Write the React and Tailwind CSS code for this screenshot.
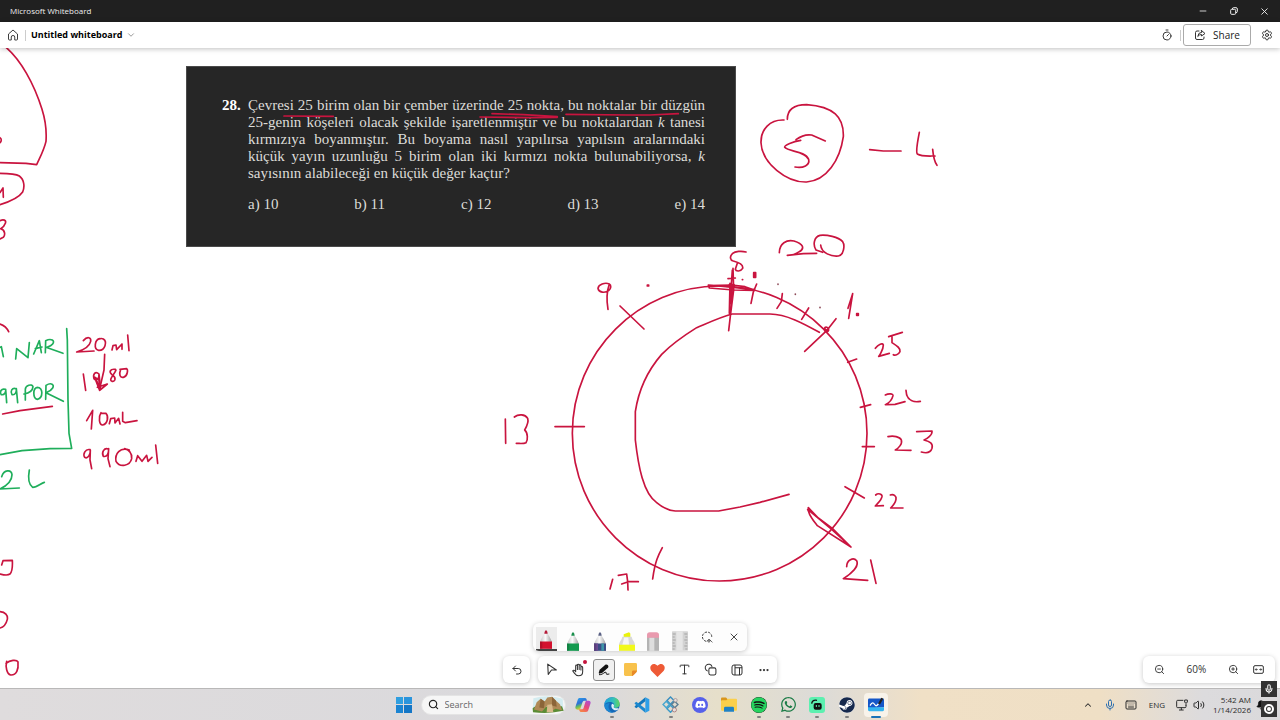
import { ChevronDown, ChevronUp, Minus, X, Timer, Settings, Undo2, Type, Ellipsis, ZoomIn, ZoomOut, Mic, Keyboard, Volume2, Search, Bell } from 'lucide-react';
import { FaDiscord, FaSpotify, FaSteam, FaWhatsapp } from 'react-icons/fa';

const RED = '#c9143f';
const GREEN = '#1fae5b';

// Pen strokes are stored per area, in thirds of a pixel from the area's origin.
const INK = [
  {
    x: 0,
    y: 0,
    color: RED,
    strokes: [
      'M18 142 C62 180 102 250 126 328 C138 366 140 395 138 424 C132 450 120 472 110 494 L78 490 L0 488',
      'M0 413 C5 415 5 425 0 428',
      'M0 520 C24 520 46 520 58 528 C74 540 74 562 68 576 C56 594 26 606 0 614',
      'M0 578 L9 564 L10 592',
      'M0 662 C10 657 20 660 16 670 C13 680 6 684 2 686 C16 690 16 706 10 712 L0 717',
    ],
  },
  {
    x: 0,
    y: 300,
    color: RED,
    strokes: [
      'M0 72 C12 76 22 86 26 95',
      'M8 342 L60 332 L157 319',
      'M250 122 C262 108 274 112 272 124 C268 142 250 150 230 156 L282 153',
      'M300 116 C284 118 280 148 296 151 C316 152 322 124 310 117 C306 115 302 115 298 117',
      'M336 150 L339 137 L348 135 L350 149 L366 132 L366 148',
      'M383 105 L387 152',
      'M314 163 L312 210 L300 262',
      'M250 222 L257 271',
      'M297 222 C286 212 278 222 282 236 C288 244 298 238 297 222 L302 268 L284 232 L299 271 L322 252 L292 262',
      'M284 232 L297 240 L298 264 L290 244',
      'M346 208 C330 206 326 216 336 224 C350 232 346 246 336 244 C324 240 344 222 348 210',
      'M362 208 C356 224 360 234 370 232 C384 228 384 208 380 206 L360 208',
      'M260 362 L278 331 L274 387',
      'M303 338 C294 352 298 376 308 375 C324 372 326 348 318 340 L303 340',
      'M328 371 L332 356 L344 354 L345 369 L356 355 L360 372',
      'M368 337 L368 364 L376 368 L411 362',
      'M270 449 C256 446 248 462 254 472 C264 478 272 462 271 450 L270 480 L275 506',
      'M325 447 C312 442 304 458 310 469 C322 472 326 460 326 446 L324 476 L330 500',
      'M388 450 C360 440 344 462 348 484 C360 504 390 498 395 476 C396 460 390 450 374 446',
      'M408 484 L413 467 L426 484 L440 466 L444 484 L456 472',
      'M467 435 L473 490',
      'M5 795 L9 782 L37 781 C38 800 38 814 30 822 C22 828 8 824 0 822',
      'M0 935 C16 936 24 946 22 958 C18 974 8 982 0 984',
      'M20 1084 C16 1100 20 1122 32 1125 C50 1126 56 1108 54 1086 C50 1078 30 1080 18 1090',
    ],
  },
  {
    x: 0,
    y: 300,
    color: GREEN,
    strokes: [
      'M0 142 L4 140 L10 170',
      'M47 177 L50 146 L84 173 L88 128',
      'M101 162 L118 122 L124 158 M106 146 L126 141',
      'M136 158 L137 122 C154 114 166 122 158 132 C152 140 144 140 138 142 L189 160',
      'M200 86 L202 120 L204 300 L207 400 L215 445 L150 446 L66 452 L0 464',
      'M16 268 C4 264 -2 276 4 284 C14 286 18 276 17 268 L20 308',
      'M48 266 C36 262 30 274 36 284 C46 286 50 276 49 266 L53 308',
      'M76 300 L76 268 C76 256 96 250 99 260 C98 274 84 280 72 282',
      'M112 262 C98 264 98 296 112 298 C130 294 130 262 112 262',
      'M137 298 L138 256 C154 246 164 254 158 264 C152 274 144 276 138 278 L190 304',
      'M5 530 C12 508 34 508 36 524 C36 544 18 558 0 567 L58 564',
      'M88 510 C84 532 84 552 98 562 C112 562 122 550 133 547',
    ],
  },
  {
    x: 180,
    y: 60,
    color: RED,
    strokes: ['M312 168 L460 169', 'M936 161 L1030 164 L1132 170 M900 171 L1040 173 L1132 172', 'M1158 163 L1340 165 L1410 165 L1495 161'],
  },
  {
    x: 490,
    y: 240,
    color: RED,
    strokes: [
      'M358 132 C345 126 325 134 324 145 C326 158 345 160 356 152 C364 145 364 135 358 132 C350 155 350 185 354 208',
      'M472 135 h4 v3 h-4 z',
      'M390 198 L462 267',
      'M46 537 L47 610',
      'M73 531 C85 522 105 522 113 535 C117 548 110 560 104 570 C114 578 114 600 108 608 C100 612 90 610 79 610',
      'M195 560 H283',
      'M368 1018 L360 1047',
      'M385 1006 L410 1002 L413 1025 L414 1050 M395 1032 L415 1025 L445 1025',
      'M517 923 C505 945 495 965 488 1017',
      // outer circle and the inner sweep
      'M688 138 C932 138 1131 335 1131 580 C1131 825 932 1023 688 1023 C446 1023 247 825 247 580 C247 335 446 138 688 138',
      'M988 277 C940 250 890 223 840 222 L726 222 C690 232 660 246 620 263 C580 288 540 318 515 343 C470 395 445 455 436 515 L436 600 C445 680 460 760 500 788 C520 805 540 812 556 813 L686 813 L750 801 L810 787 L897 763',
    ],
  },
  {
    x: 690,
    y: 90,
    color: RED,
    strokes: [
      'M282 90 C240 88 212 118 213 158 C216 220 290 278 350 276 C410 272 450 210 460 140 C462 80 430 50 350 44 C305 44 292 62 292 88',
      'M318 149 C330 140 345 132 365 135 L406 153 M332 151 C310 155 282 165 284 172 C295 186 345 182 356 208 C360 225 340 236 315 231',
      'M539 179 L580 183 L633 183',
      'M688 127 C684 150 676 185 682 192 C695 200 715 198 735 198 M728 178 C730 200 733 215 741 226',
      'M268 488 C268 460 290 448 312 453 C340 462 345 475 328 485 C315 494 298 496 292 496 L340 491 L380 490',
      'M392 465 C394 490 425 500 445 498 C462 495 465 465 458 455 C445 440 410 434 390 436 C372 440 368 465 378 480 L398 487',
      'M168 486 C155 482 135 484 128 490 C118 500 120 510 130 513 C150 518 160 525 158 535 C152 545 138 545 136 538 L142 520',
      'M129 535 L131 600 L122 670 L116 722 M127 540 L118 670 L120 580 L126 590 L124 640 M114 566 L136 564',
      'M118 584 h14 v6 h-14 z',
      'M55 587 L125 585 L165 590 L195 601 L130 600 L58 594 L55 585 L190 598',
      'M157 569 h1',
      'M191 548 h6 v14 h-6 z M194 550 v10',
      'M500 671 h5 v5 h-5 z',
      'M200 582 L190 606 L183 640',
      'M277 611 L274 635 L261 655',
      'M356 654 L335 688',
      'M438 686 L410 722 L344 784',
      'M403 716 C406 708 416 712 416 720 C414 728 402 726 404 716 L412 722 L406 724',
      'M474 655 L488 611 L476 685',
      'M556 775 C565 762 578 758 580 765 C580 780 566 800 566 799 L598 790',
      'M596 740 L637 727 M606 740 L606 758 C622 768 632 775 630 785 C625 795 615 797 610 794',
      'M473 817 L500 807',
    ],
  },
  {
    x: 690,
    y: 90,
    color: '#8d4a58',
    strokes: ['M264 582 v1', 'M316 612 v1', 'M390 652 v1'],
  },
  {
    x: 730,
    y: 320,
    color: RED,
    strokes: [
      'M391 262 L422 254',
      'M397 380 H433',
      'M345 500 L403 534',
      'M235 563 L265 594 L307 625 L363 681 L262 617 C252 604 240 590 236 575 L233 568 L305 628 L363 681',
      'M466 225 C475 220 490 220 489 227 C486 240 475 250 466 254 L495 253 L525 245',
      'M528 211 L530 225 C535 240 550 248 571 244',
      'M474 350 C490 346 510 350 514 360 C518 372 505 385 496 390 L543 391',
      'M560 335 L606 333 C608 345 590 357 582 360 C600 365 610 370 606 385 C602 398 588 400 574 396',
      'M437 525 C445 518 457 522 456 530 C454 542 440 552 436 558 L460 557',
      'M481 525 C490 521 500 528 498 538 C496 550 488 558 482 564 L519 564',
      'M350 740 C350 720 370 710 380 722 C388 738 365 760 340 776 L413 781',
      'M422 720 L438 790',
    ],
  },
];

const QUESTION = [
  'Çevresi 25 birim olan bir çember üzerinde 25 nokta, bu noktalar bir düzgün',
  <>25-genin köşeleri olacak şekilde işaretlenmiştir ve bu noktalardan <i>k</i> tanesi</>,
  'kırmızıya boyanmıştır. Bu boyama nasıl yapılırsa yapılsın aralarındaki',
  <>küçük yayın uzunluğu 5 birim olan iki kırmızı nokta bulunabiliyorsa, <i>k</i></>,
];

const CHOICES = ['a) 10', 'b) 11', 'c) 12', 'd) 13', 'e) 14'];

function Ink() {
  return (
    <svg className="absolute inset-0 w-full h-full pointer-events-none" role="img" aria-label="Ink" fill="none" strokeWidth="5" strokeLinecap="round" strokeLinejoin="round">
      <g transform="translate(0 -48)">
        {INK.map((area, i) => (
          <g key={i} transform={`translate(${area.x} ${area.y}) scale(0.33333)`} stroke={area.color}>
            {area.strokes.map((d) => (
              <path key={d} d={d} />
            ))}
          </g>
        ))}
      </g>
    </svg>
  );
}

function QuestionCard() {
  return (
    <article className="absolute left-[186px] top-[18px] w-[550px] h-[181px] bg-[#262626] text-[#dddcd8] border border-[#4a4a4a] pt-[30px] pl-[35px] pr-[30px] font-['Liberation_Serif',serif] text-[15px] leading-[17px]">
      <div className="flex gap-2">
        <b className="w-[18px] whitespace-nowrap text-white">28.</b>
        <div className="flex-1">
          {QUESTION.map((line, i) => (
            <p key={i} className="[text-align-last:justify] whitespace-nowrap">
              {line}
            </p>
          ))}
          <p>sayısının alabileceği en küçük değer kaçtır?</p>
          <div className="flex justify-between mt-3.5">
            {CHOICES.map((c) => (
              <span key={c}>{c}</span>
            ))}
          </div>
        </div>
      </div>
    </article>
  );
}

function IconButton({ label, className = '', children }) {
  return (
    <button type="button" aria-label={label} className={`flex items-center justify-center ${className}`}>
      {children}
    </button>
  );
}

function Pen({ tip, band, id }) {
  return (
    <svg viewBox="0 0 36 56" className="w-[12px] h-[19px]">
      <defs>
        <linearGradient id={id}>
          <stop offset="0" stopColor="#c4c4c4" />
          <stop offset="0.45" stopColor="#fafafa" />
          <stop offset="1" stopColor="#9c9c9c" />
        </linearGradient>
      </defs>
      <path d="M13 10 C10 18 1 26 0 40 V56 H36 V40 C35 26 26 18 23 10 Z" fill={`url(#${id})`} />
      <path d="M13 11 C14 2 16 0 18 0 C20 0 22 2 23 11 Z" fill={tip} />
      {band === 'galaxy' ? (
        <>
          <rect y="34" width="36" height="22" fill="#3c4c84" />
          <path d="M0 34 H12 V56 H0 Z" fill="#6b4c93" />
          <path d="M22 34 H30 V56 H22 Z" fill="#3f95a8" />
        </>
      ) : (
        <rect y="34" width="36" height="22" fill={band} />
      )}
      <rect x="0" y="34" width="7" height="22" fill="#000" opacity="0.15" />
    </svg>
  );
}

function PenTray() {
  return (
    <div className="w-[214px] h-[28px] grid grid-cols-8 bg-[#fdfdfd] rounded-md shadow-[0_1px_5px_rgba(0,0,0,0.22)] overflow-hidden">
      <IconButton label="Red pen" className="items-end! mx-auto mt-[4px] w-[21px] bg-[#ececec] border-b-2 border-[#444]">
        <Pen id="pen-red" tip="#b51a38" band="#d3122f" />
      </IconButton>
      <IconButton label="Green pen" className="items-end!">
        <Pen id="pen-green" tip="#1a8f4c" band="#149a4f" />
      </IconButton>
      <IconButton label="Galaxy pen" className="items-end!">
        <Pen id="pen-galaxy" tip="#5a6285" band="galaxy" />
      </IconButton>
      <IconButton label="Highlighter" className="items-end!">
        <svg viewBox="0 0 48 56" className="w-[16px] h-[19px]">
          <path d="M14 16 V6 L30 0 L34 4 V16 Z" fill="#e9f20c" />
          <path d="M10 14 H38 C40 26 48 28 48 40 V56 H0 V40 C0 28 8 26 10 14 Z" fill="#d9d9d9" />
          <path d="M15 16 H28 C29 28 30 30 30 38 H10 C12 28 14 26 15 16 Z" fill="#f6f6f6" />
          <path d="M0 38 H48 V56 H0 Z" fill="#f2f91a" />
        </svg>
      </IconButton>
      <IconButton label="Eraser" className="items-end!">
        <svg viewBox="0 0 36 56" className="w-[12px] h-[19px]">
          <rect width="36" height="30" rx="8" fill="#e99aae" />
          <rect y="17" width="36" height="39" fill="#b4b4b4" />
          <rect x="7" y="17" width="15" height="39" fill="#dedede" />
        </svg>
      </IconButton>
      <IconButton label="Ruler" className="items-end!">
        <svg viewBox="0 0 48 58" className="w-[16px] h-[20px]">
          <rect width="48" height="58" rx="2" fill="#d3d3d3" />
          <rect x="13" width="19" height="58" fill="#e6e6e6" />
          <path d="M2 8h9M2 17h6M2 26h9M2 35h6M2 44h9M2 53h6M46 8h-9M46 17h-6M46 26h-9M46 35h-6M46 44h-9M46 53h-6" stroke="#8b8b8b" strokeWidth="2" />
        </svg>
      </IconButton>
      <IconButton label="Lasso select">
        <svg viewBox="0 0 36 36" className="w-3 h-3" fill="none" stroke="#333" strokeWidth="3">
          <path d="M16 31 A14 14 0 1 1 32 20" strokeDasharray="7 4" />
          <path d="M20 29 C22 24 30 26 27 31 C24 36 16 30 22 27 C28 26 30 30 34 34" strokeWidth="2.5" />
        </svg>
      </IconButton>
      <IconButton label="Close">
        <X size={12} strokeWidth={1.8} color="#333" />
      </IconButton>
    </div>
  );
}

function Toolbar() {
  const panel = 'h-[27px] bg-white rounded-md shadow-[0_1px_5px_rgba(0,0,0,0.22)]';
  return (
    <div className="flex gap-2">
      <IconButton label="Undo" className={`${panel} w-[27px]`}>
        <Undo2 size={12} strokeWidth={2} color="#333" />
      </IconButton>
      <div className={`${panel} w-[239px] grid grid-cols-9`}>
        <IconButton label="Select">
          <svg viewBox="0 0 24 24" className="w-[13px] h-[13px]" fill="none" stroke="#333" strokeWidth="2" strokeLinejoin="round">
            <path d="M5 2 L21 13 H12 L6 21 Z" />
          </svg>
        </IconButton>
        <IconButton label="Pan" className="relative">
          <svg viewBox="0 0 24 24" className="w-[14px] h-[14px]" fill="none" stroke="#333" strokeWidth="1.8" strokeLinecap="round" strokeLinejoin="round">
            <path d="M8 12 V5 a1.5 1.5 0 0 1 3 0 V11 M11 11 V3.5 a1.5 1.5 0 0 1 3 0 V11 M14 11 V4.5 a1.5 1.5 0 0 1 3 0 V12 M17 12 V7.5 a1.5 1.5 0 0 1 3 0 V15 C20 20 17 22 13 22 C9 22 7 19 5.5 17 L3 13.5 C4 12 6 12 8 15 V12" />
          </svg>
          <span className="absolute right-[4px] top-[4px] w-1 h-1 rounded-full bg-[#c4143c]" />
        </IconButton>
        <IconButton label="Pens" className="w-[22px] h-[22px] place-self-center rounded-[3px] border border-[#8a8a8a] bg-[#f0f0f0]">
          <svg viewBox="0 0 36 36" className="w-3 h-3">
            <path d="M2 27 L5 17 L22 2 C27 -1 34 5 30 11 L13 26 L4 29 Z" fill="#111" />
            <path d="M3 32 C10 33 16 28 21 25 C26 22 24 30 26 31 L34 30" fill="none" stroke="#111" strokeWidth="3" />
          </svg>
        </IconButton>
        <IconButton label="Sticky note">
          <svg viewBox="0 0 36 36" className="w-[13px] h-[13px]">
            <path d="M4 0 H32 Q36 0 36 4 V22 L23 36 H4 Q0 36 0 32 V4 Q0 0 4 0 Z" fill="#f8c24c" />
            <path d="M22 36 V25 Q22 21 26 21 H36 Q36 24 34 26 L27 33 Q24 36 22 36 Z" fill="#e88a26" />
          </svg>
        </IconButton>
        <IconButton label="Reactions">
          <svg viewBox="0 0 24 22" className="w-[15px] h-[14px]">
            <path d="M12 22 L2 12 C-3 5 5 -3 12 4 C19 -3 27 5 22 12 Z" fill="#ee5a36" />
          </svg>
        </IconButton>
        <IconButton label="Text">
          <Type size={13} strokeWidth={1.8} color="#333" />
        </IconButton>
        <IconButton label="Shapes">
          <svg viewBox="0 0 24 24" className="w-[13px] h-[13px]" fill="none" stroke="#333" strokeWidth="1.9">
            <path d="M7 15 A6.5 6.5 0 1 1 15 7" />
            <rect x="9" y="9" width="13" height="13" rx="3" />
          </svg>
        </IconButton>
        <IconButton label="Templates">
          <svg viewBox="0 0 24 24" className="w-[12px] h-[12px]" fill="none" stroke="#333" strokeWidth="2">
            <rect x="2" y="2" width="20" height="20" rx="4" />
            <path d="M8 2 V22 M8 7.5 H22 M17 7.5 V22" />
          </svg>
        </IconButton>
        <IconButton label="More">
          <Ellipsis size={12} strokeWidth={2.5} color="#333" />
        </IconButton>
      </div>
    </div>
  );
}

function ZoomPanel() {
  return (
    <div className="absolute right-[5px] bottom-[5px] w-[132px] h-[27px] px-[5px] flex items-center justify-between bg-white rounded-md shadow-[0_1px_5px_rgba(0,0,0,0.22)] text-[10px] text-[#333]">
      <IconButton label="Zoom out" className="w-[22px]">
        <ZoomOut size={11} strokeWidth={2} />
      </IconButton>
      <button type="button" className="w-[46px]">60%</button>
      <IconButton label="Zoom in" className="w-[22px]">
        <ZoomIn size={11} strokeWidth={2} />
      </IconButton>
      <IconButton label="Fit to screen" className="w-[22px]">
        <svg viewBox="0 0 33 27" className="w-[11px] h-[9px]" fill="none" stroke="#333" strokeWidth="3">
          <rect x="2" y="2" width="29" height="23" rx="4" />
          <path d="M7 13.5 H14 M19 13.5 H26 M10 10 L7 13.5 L10 17 M23 10 L26 13.5 L23 17" strokeWidth="2.5" />
        </svg>
      </IconButton>
    </div>
  );
}

function Copilot() {
  return (
    <svg viewBox="0 0 48 48" className="w-4 h-4">
      <defs>
        <linearGradient id="cp-a" x2="0.4" y2="1">
          <stop offset="0" stopColor="#2aa5e8" />
          <stop offset="0.5" stopColor="#2f6fd8" />
          <stop offset="0.7" stopColor="#5dbb63" />
          <stop offset="1" stopColor="#f0cc30" />
        </linearGradient>
        <linearGradient id="cp-b" x1="1" x2="0.4" y2="1">
          <stop offset="0" stopColor="#a44fe0" />
          <stop offset="0.6" stopColor="#e8487a" />
          <stop offset="1" stopColor="#f4804a" />
        </linearGradient>
      </defs>
      <path d="M15 3 H30 C34 3 35 7 36 11 H27 C24 11 23 14 22 17 L17 33 C16 37 14 38 11 38 H8 C1 38 0 33 2 27 L8 9 C9 5 11 3 15 3 Z" fill="url(#cp-a)" />
      <path d="M33 45 H18 C14 45 13 41 12 37 H20 C23 37 25 35 26 32 L31 15 C32 12 34 11 37 11 H40 C47 11 48 15 46 21 L40 39 C39 43 37 45 33 45 Z" fill="url(#cp-b)" />
    </svg>
  );
}

function Edge() {
  return (
    <svg viewBox="0 0 48 48" className="w-4 h-4">
      <defs>
        <linearGradient id="edge-top" x2="1">
          <stop offset="0" stopColor="#1f9fe0" />
          <stop offset="0.6" stopColor="#35c1b8" />
          <stop offset="1" stopColor="#62d55a" />
        </linearGradient>
      </defs>
      <circle cx="24" cy="24" r="23" fill="#1568b8" />
      <path d="M1 24 C1 10 12 1 25 1 C38 1 47 11 47 21 C47 29 41 33 34 33 C29 33 28 30 30 27 C32 20 26 15 18 15 C10 15 3 19 1 24 Z" fill="url(#edge-top)" />
      <path d="M30 27 C28 30 29 34 36 34 C40 34 43 33 44 35 C40 40 34 41 29 38 C22 34 20 26 24 20 C28 20 31 23 30 27 Z" fill="#dff0f6" />
      <path d="M17 19 C9 30 16 44 28 47 C14 48 2 38 1 25 C5 20 11 18 17 19 Z" fill="#1c87d2" />
    </svg>
  );
}

function VsCode() {
  return (
    <svg viewBox="0 0 48 48" className="w-4 h-4">
      <path d="M34 1 L46 7 V41 L34 47 Z" fill="#2d9fe8" />
      <path d="M34 13 L7 34 L2 30 V28 L34 1 Z" fill="#1177bd" />
      <path d="M34 35 L7 14 L2 18 V20 L34 47 Z" fill="#1b88cf" />
    </svg>
  );
}

function DiamondApp() {
  return (
    <svg viewBox="0 0 48 48" className="w-[17px] h-[17px]" fill="none" strokeWidth="4">
      <path d="M24 3 L34 13 L24 23 L14 13 Z" stroke="#3a8fc0" />
      <path d="M12 15 L21 24 L12 33 L3 24 Z" stroke="#48a7cf" />
      <path d="M36 15 L45 24 L36 33 L27 24 Z" stroke="#5e7f94" />
      <path d="M24 26 L34 36 L24 46 L14 36 Z" stroke="#3c9ac8" />
      <circle cx="38" cy="12" r="5" stroke="#9a8b8b" strokeWidth="2" fill="#e6dedc" />
      <circle cx="35" cy="39" r="6" stroke="#9c6767" strokeWidth="2" fill="#e6dedc" />
    </svg>
  );
}

function Explorer() {
  return (
    <svg viewBox="0 0 48 44" className="w-4 h-[15px]">
      <path d="M0 4 Q0 1 3 1 H15 L20 6 V14 H0 Z" fill="#d9961d" />
      <path d="M0 12 Q0 9 3 9 H16 L21 5 H45 Q48 5 48 8 V38 Q48 41 45 41 H3 Q0 41 0 38 Z" fill="#fbd04b" />
      <path d="M9 44 V33 Q9 29 13 29 H35 Q39 29 39 33 V44 Z" fill="#2082c4" />
    </svg>
  );
}

function GreenBot() {
  return (
    <span className="w-4 h-4 rounded-[3px] bg-[#5cf0b0] flex items-center justify-center">
      <svg viewBox="0 0 36 36" className="w-3 h-3">
        <path d="M2 14 C3 5 9 2 18 4" fill="none" stroke="#111" strokeWidth="4" />
        <rect x="8" y="12" width="24" height="20" rx="6" fill="#111" />
        <path d="M16 18 V24 M24 18 V24" stroke="#5cf0b0" strokeWidth="3" />
      </svg>
    </span>
  );
}

function WhiteboardApp() {
  return (
    <svg viewBox="0 0 48 44" className="w-4 h-[15px]">
      <path d="M0 8 Q0 4 4 4 H44 Q48 4 48 8 V30 L0 34 Z" fill="#1557c8" />
      <path d="M0 30 H48 V38 Q48 42 44 42 H4 Q0 42 0 38 Z" fill="#33b4f0" />
      <path d="M7 24 C12 14 16 16 20 22 C24 28 27 26 31 20" fill="none" stroke="#fff" strokeWidth="4" strokeLinecap="round" />
      <path d="M30 20 L40 2 L46 5 L36 22 Z" fill="#222" />
    </svg>
  );
}

const APPS = [
  { name: 'Copilot', icon: <Copilot /> },
  { name: 'Edge', icon: <Edge />, running: true },
  { name: 'Visual Studio Code', icon: <VsCode /> },
  { name: 'Diagrams', icon: <DiamondApp />, running: true },
  {
    name: 'Discord',
    icon: (
      <span className="w-4 h-4 rounded-full bg-[#5661ea] flex items-center justify-center">
        <FaDiscord size={11} color="#fff" />
      </span>
    ),
  },
  { name: 'File Explorer', icon: <Explorer /> },
  {
    name: 'Spotify',
    icon: (
      <span className="rounded-full bg-[#111]">
        <FaSpotify size={16} color="#25d35f" />
      </span>
    ),
    running: true,
  },
  { name: 'WhatsApp', icon: <FaWhatsapp size={17} color="#1c7c47" />, running: true },
  { name: 'Android', icon: <GreenBot />, running: true },
  {
    name: 'Steam',
    icon: (
      <span className="rounded-full bg-white">
        <FaSteam size={16} color="#16294d" />
      </span>
    ),
    running: true,
  },
  { name: 'Whiteboard', icon: <WhiteboardApp />, active: true },
];

function Taskbar() {
  return (
    <footer className="h-8 shrink-0 grid grid-cols-[1fr_auto_1fr] items-center border-t border-[#b9b8b8] bg-[linear-gradient(90deg,#dfdcdd_0%,#dad9dc_40%,#dcdada_48%,#e6dfca_56%,#dcdbd8_64%,#f0e0c6_72%,#efdfc5_86%,#dcdbdd_94%,#dad9db_100%)]">
      <span />
      <div className="flex items-center pl-0.5">
        <IconButton label="Start" className="w-[24px] h-6">
          <span className="grid grid-cols-2 gap-px w-4 h-4">
            <span className="bg-[#2f9fe0]" />
            <span className="bg-[#2a94dc]" />
            <span className="bg-[#1b84d2]" />
            <span className="bg-[#1476c6]" />
          </span>
        </IconButton>
        <label className="ml-[5px] mr-[3px] w-[145px] h-5 pl-1.5 pr-px flex items-center gap-1.5 rounded-full bg-[#f6f6f6] border border-[#e4e4e4]">
          <Search size={11} strokeWidth={2.5} color="#222" className="shrink-0" />
          <input aria-label="Search" placeholder="Search" className="min-w-0 flex-1 bg-transparent text-[9px] placeholder:text-[#666] outline-none" />
          <svg viewBox="0 0 96 50" className="w-8 h-[17px] shrink-0">
            <path d="M4 6 Q50 -6 92 8 L94 40 Q50 54 2 44 Z" fill="#d4ecf0" />
            <path d="M2 36 C10 28 20 26 30 32 L90 30 L95 44 Q50 54 3 48 Z" fill="#5b8c34" />
            <path d="M6 40 L14 18 L26 8 L38 16 L46 4 L60 2 L72 14 L84 24 L90 42 L70 38 L58 46 L44 30 L30 46 Z" fill="#b08a58" />
            <path d="M26 8 L38 16 L36 36 L22 34 Z M60 2 L72 14 L74 32 L60 28 Z" fill="#8b6539" />
            <path d="M46 26 L60 24 L64 48 H44 Z" fill="#d8b98a" />
          </svg>
        </label>
        <div className="grid grid-cols-11 w-[322px]">
          {APPS.map((app) => (
            <button
              key={app.name}
              type="button"
              aria-label={app.name}
              className={`relative w-6 h-6 mx-auto flex items-center justify-center rounded ${app.active ? 'bg-[#f8f3ea]' : ''}`}
            >
              {app.icon}
              {app.running && <span className="absolute -bottom-px w-1 h-0.5 rounded-full bg-[#808080]" />}
              {app.active && <span className="absolute -bottom-px w-2.5 h-0.5 rounded-full bg-[#1a73b8]" />}
            </button>
          ))}
        </div>
      </div>
      <div className="flex items-center justify-end text-[#2b2b2b] text-[8px] leading-[10px]">
        <IconButton label="Hidden icons" className="w-[22px]">
          <ChevronUp size={10} strokeWidth={2.5} />
        </IconButton>
        <IconButton label="Microphone" className="w-[21px]">
          <Mic size={12} strokeWidth={2} color="#2d6fb0" />
        </IconButton>
        <IconButton label="Touch keyboard" className="w-[22px]">
          <Keyboard size={12} strokeWidth={2} />
        </IconButton>
        <button type="button" className="w-[30px]">ENG</button>
        <IconButton label="Network" className="w-[20px]">
          <svg viewBox="0 0 36 36" className="w-3 h-3" fill="none" stroke="#2b2b2b" strokeWidth="3">
            <path d="M22 4 H5 Q2 4 2 7 V23 Q2 26 5 26 H27 Q30 26 30 23 V18 M16 26 V33 M9 33 H23" />
            <path d="M26 3 H34 V10 Q30 15 26 10 Z M30 14 V20" />
          </svg>
        </IconButton>
        <IconButton label="Volume" className="w-[14px]">
          <Volume2 size={12} strokeWidth={2} />
        </IconButton>
        <button type="button" className="w-[45px] text-right">
          5:42 AM
          <br />
          1/14/2026
        </button>
        <IconButton label="Notifications" className="w-[29px] pr-[9px]">
          <Bell size={10} strokeWidth={2} fill="#111" color="#111" />
        </IconButton>
      </div>
    </footer>
  );
}

function Header() {
  return (
    <header className="relative z-10 h-[26px] shrink-0 flex items-center justify-between bg-white px-[6px] shadow-[0_1px_5px_rgba(0,0,0,0.25)] text-[#222]">
      <div className="flex items-center">
        <IconButton label="Home" className="w-[14px]">
          <svg viewBox="0 0 24 24" className="w-3 h-3" fill="none" stroke="#333" strokeWidth="1.9" strokeLinejoin="round">
            <path d="M3 10 L12 2 L21 10 V20 Q21 22 19 22 H15.5 V16 Q15.5 13 12 13 Q8.5 13 8.5 16 V22 H5 Q3 22 3 20 Z" />
          </svg>
        </IconButton>
        <span className="w-px h-[11px] mx-[5px] bg-[#ccc]" />
        <button type="button" className="flex items-center gap-1 text-[9px] font-bold text-black">
          Untitled whiteboard
          <ChevronDown size={10} strokeWidth={1.8} color="#777" />
        </button>
      </div>
      <div className="flex items-center">
        <IconButton label="Timer" className="w-[14px]">
          <Timer size={12} strokeWidth={1.8} />
        </IconButton>
        <span className="w-px h-[11px] ml-[6px] mr-[2px] bg-[#ccc]" />
        <button type="button" className="w-[68px] h-[22px] mr-[9px] flex items-center justify-center gap-[7px] border border-[#aaa] rounded-[3px] text-[10px]">
          <svg viewBox="0 0 24 24" className="w-3 h-3" fill="none" stroke="#333" strokeWidth="2" strokeLinejoin="round" strokeLinecap="round">
            <path d="M10 4 H6 Q3 4 3 7 V18 Q3 21 6 21 H17 Q20 21 20 18 V16" />
            <path d="M15 3 L22 9 L15 14 V11 Q10 11 7.5 15 Q8 7 15 6.5 Z" />
          </svg>
          Share
        </button>
        <IconButton label="Settings" className="w-[14px]">
          <Settings size={12} strokeWidth={1.8} />
        </IconButton>
      </div>
    </header>
  );
}

export default function App() {
  return (
    <div className="relative h-screen flex flex-col overflow-hidden bg-white font-['Open_Sans','Noto_Sans',sans-serif]">
      <div className="h-[22px] shrink-0 flex items-center justify-between pl-[10px] bg-[#202020] text-[#eee] text-[8px]">
        <span>Microsoft Whiteboard</span>
        <div className="flex">
          <IconButton label="Minimize" className="w-[31px]">
            <Minus size={10} strokeWidth={2} />
          </IconButton>
          <IconButton label="Restore" className="w-[31px]">
            <svg viewBox="0 0 24 24" className="w-2 h-2" fill="none" stroke="#eee" strokeWidth="3">
              <rect x="2" y="7" width="15" height="15" rx="3" />
              <path d="M7 6 Q7 2 11 2 H18 Q22 2 22 6 V13 Q22 17 18 17" />
            </svg>
          </IconButton>
          <IconButton label="Close window" className="w-[31px]">
            <X size={11} strokeWidth={2} />
          </IconButton>
        </div>
      </div>
      <Header />
      <main className="relative flex-1 min-h-0 overflow-hidden">
        <QuestionCard />
        <Ink />
        <div className="absolute inset-x-0 bottom-[5px] flex flex-col items-center gap-[5px] pointer-events-none *:pointer-events-auto">
          <PenTray />
          <Toolbar />
        </div>
        <ZoomPanel />
      </main>
      <Taskbar />
      <div className="absolute right-[3px] bottom-[3px] flex flex-col gap-1">
        <span className="w-4 h-4 bg-[#333] flex items-center justify-center">
          <Mic size={10} strokeWidth={2.5} color="#fff" />
        </span>
        <span className="w-4 h-4 bg-[#333] flex items-center justify-center">
          <span className="w-2.5 h-2.5 rounded-full border-2 border-white flex items-center justify-center">
            <span className="w-1 h-1 rounded-full bg-white" />
          </span>
        </span>
      </div>
    </div>
  );
}
